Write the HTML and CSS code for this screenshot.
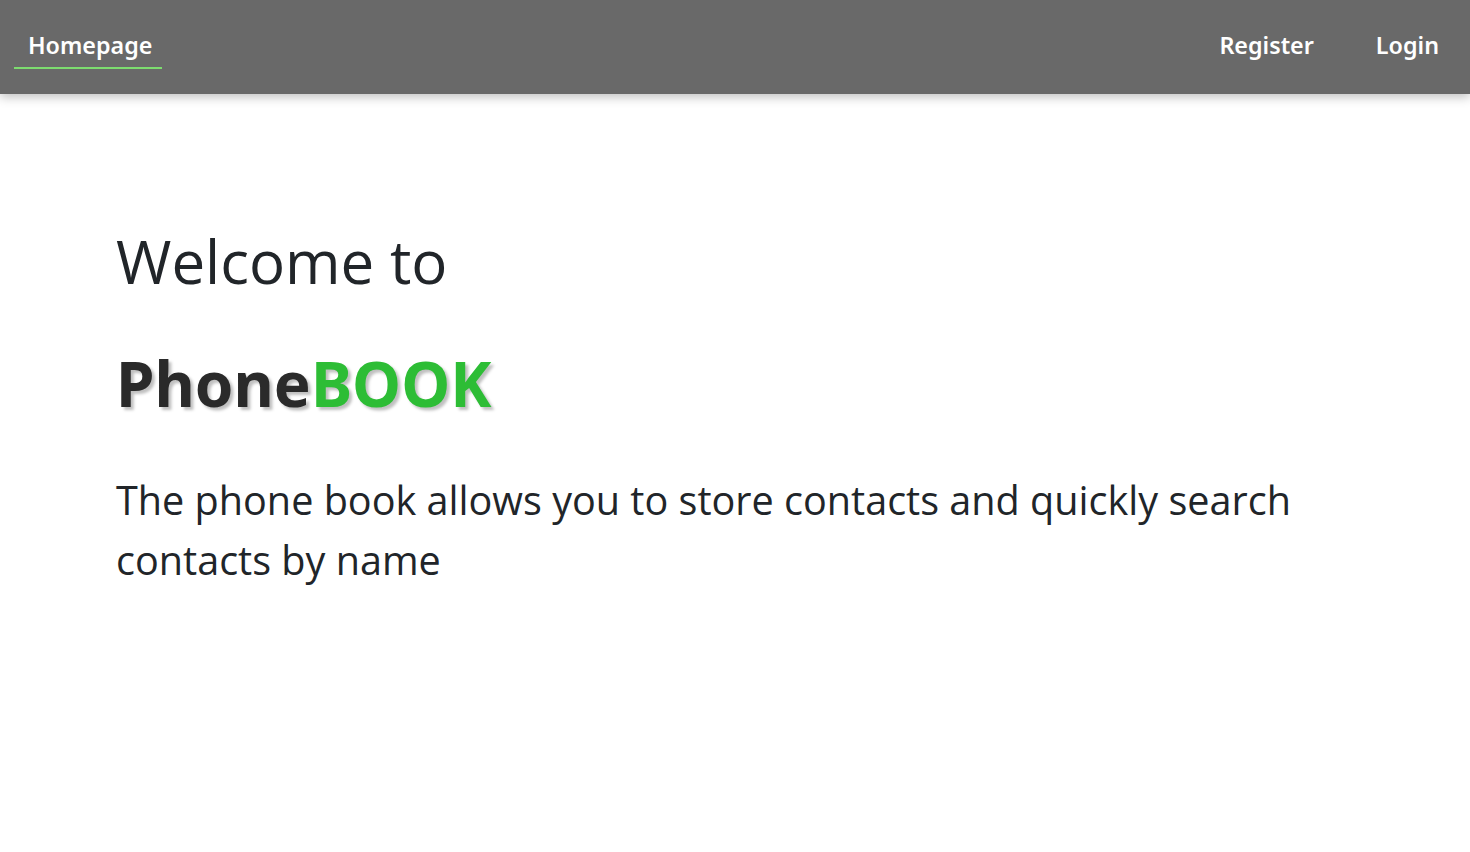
FILE: index.html
```html
<!DOCTYPE html>
<html lang="en">
<head>
<meta charset="utf-8">
<title>PhoneBOOK</title>
<link rel="stylesheet" href="styles.css">
</head>
<body>
<header class="topbar">
  <nav class="nav">
    <a class="nav-link active" href="#">Homepage</a>
    <div class="nav-right">
      <a class="nav-link" href="#">Register</a>
      <a class="nav-link" href="#">Login</a>
    </div>
  </nav>
</header>
<main class="hero">
  <h1 class="welcome">Welcome to</h1>
  <h2 class="brand"><span class="phone">Phone</span><span class="book">BOOK</span></h2>
  <p class="desc">The phone book allows you to store contacts and quickly search contacts by name</p>
</main>
</body>
</html>
```
FILE: styles.css
```css
* { box-sizing: border-box; }
html, body { margin: 0; padding: 0; background: #fff; }
body { font-family: "Open Sans", sans-serif; color: #212529; }

.topbar {
  height: 94px;
  background: #696969;
  box-shadow: 0 3px 10px rgba(0,0,0,0.25);
  position: relative;
  z-index: 1;
}
.nav {
  height: 100%;
  display: flex;
  align-items: center;
  justify-content: space-between;
  padding: 0 17px 0 14px;
}
.nav-right { display: flex; gap: 34px; }
.nav-link {
  font-family: "Noto Sans", sans-serif;
  font-weight: 600;
  font-size: 23.3px;
  color: #fff;
  text-decoration: none;
  padding: 6px 14px 8px;
  border-bottom: 2px solid transparent;
  line-height: 28px;
}
.nav-link.active { padding-right: 10px; border-bottom-color: #7ddc6f; }

.hero { padding: 127px 0 0 116px; width: 1330px; }
.welcome {
  margin: 0;
  font-family: "Open Sans", sans-serif;
  font-weight: 400;
  font-size: 60px;
  line-height: 80px;
}
.brand {
  margin: 42px 0 0 0;
  font-family: "Noto Sans", sans-serif;
  font-weight: 700;
  font-size: 62px;
  line-height: 80px;
  text-shadow: 3px 3px 3px rgba(0,0,0,0.25);
}
.phone { color: #2a2a2a; }
.book { color: #2dbd35; }
.desc {
  margin: 47px 0 0 0;
  font-family: "Open Sans", sans-serif;
  font-size: 39.6px;
  line-height: 60px;
}
```
